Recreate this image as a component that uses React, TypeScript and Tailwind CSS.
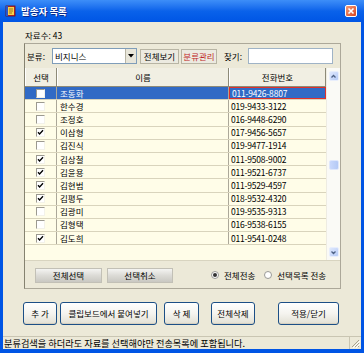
import React from 'react'

const rows = [
  { name: '조동화', phone: '011-9426-8807', checked: false, selected: true },
  { name: '한수경', phone: '019-9433-3122', checked: false },
  { name: '조정호', phone: '016-9448-6290', checked: false },
  { name: '이삼형', phone: '017-9456-5657', checked: true },
  { name: '김진식', phone: '019-9477-1914', checked: false },
  { name: '김상철', phone: '011-9508-9002', checked: true },
  { name: '김윤용', phone: '011-9521-6737', checked: true },
  { name: '김현범', phone: '011-9529-4597', checked: true },
  { name: '김평두', phone: '018-9532-4320', checked: true },
  { name: '김광미', phone: '019-9535-9313', checked: false },
  { name: '김형택', phone: '016-9538-6155', checked: false },
  { name: '김도희', phone: '011-9541-0248', checked: true },
]

export default function App() {
  return (
    <div className="w-[364px] h-[353px] overflow-hidden bg-[#0055e5] flex flex-col font-['Noto_Sans_CJK_KR',sans-serif] text-[8.5px] leading-[11px] text-black">
      {/* Title bar */}
      <div className="h-[22px] shrink-0 flex items-center pl-[5px] pr-[7px] bg-gradient-to-b from-[#3d8ef8] via-[#0a62ea] to-[#0055e5]">
        <BookIcon />
        <span className="ml-[4px] text-white font-bold text-[9.5px] [text-shadow:1px_1px_#0b2a8a]">발송자 목록</span>
        <div className="ml-auto w-[12px] h-[12px] rounded-[2px] border border-white bg-gradient-to-br from-[#f39a76] to-[#d8421b] flex items-center justify-center">
          <svg width="8" height="8" viewBox="0 0 8 8">
            <path d="M1.5 1.5L6.5 6.5M6.5 1.5L1.5 6.5" stroke="white" strokeWidth="1.6" />
          </svg>
        </div>
      </div>

      {/* Body */}
      <div className="flex-1 mx-[3px] mb-[4px] bg-[#ece9d8] flex flex-col">
        <div className="h-[21px] shrink-0 flex items-end pb-[2px] pl-[22px]">자료수: 43</div>

        {/* Panel */}
        <div className="ml-[21px] w-[317px] h-[246px] shrink-0 border border-[#aca899] border-l-[#858270] flex flex-col">
          {/* Toolbar */}
          <div className="h-[24px] shrink-0 flex items-center pl-[2px]">
            <span className="w-[25px]">분류:</span>
            <div className="w-[85px] h-[16px] bg-white border border-[#7f9db9] flex items-center">
              <span className="flex-1 pl-[2px]">비지니스</span>
              <div className="w-[11px] h-[14px] bg-[#e8e6da] border-l border-[#b8b5a5] flex items-center justify-center">
                <svg width="6" height="4" viewBox="0 0 6 4">
                  <path d="M0 0H6L3 3.5Z" fill="#000" />
                </svg>
              </div>
            </div>
            <ToolBtn className="ml-[3px] w-[39px]">전체보기</ToolBtn>
            <ToolBtn className="ml-[2px] w-[36px] text-[#c02828]">분류관리</ToolBtn>
            <span className="ml-[7px] w-[24px]">찾기:</span>
            <div className="w-[85px] h-[16px] bg-white border border-[#9fb3c6]" />
          </div>

          {/* Table */}
          <div className="h-[192px] shrink-0 flex bg-[#fffde8]">
            <div className="w-[301px] flex flex-col">
              <div className="h-[19px] shrink-0 flex bg-[#f1efe3] border-b border-[#8d8a78]">
                <HeadCell className="w-[32px]">선택</HeadCell>
                <HeadCell className="w-[172px]">이름</HeadCell>
                <HeadCell className="w-[97px]">전화번호</HeadCell>
              </div>
              {rows.map((r) => (
                <div key={r.name} className={`h-[13.2px] shrink-0 flex border-b border-[#d9d4bc] ${r.selected ? 'bg-[#316ac5] text-white' : ''}`}>
                  <div className="w-[32px] border-r border-[#aca899] flex items-center justify-center">
                    <Check checked={r.checked} />
                  </div>
                  <div className="w-[172px] border-r border-[#aca899] pl-[3px] flex items-center">{r.name}</div>
                  <div className={`w-[97px] pl-[2px] flex items-center tracking-[-0.2px] ${r.selected ? 'border border-[#e0302a]' : ''}`}>{r.phone}</div>
                </div>
              ))}
            </div>
            <Scrollbar />
          </div>

          {/* Panel buttons */}
          <div className="flex-1 flex items-center pl-[10px] pt-[1px] border-t border-[#d8d4c0]">
            <GreyBtn className="w-[67px]">전체선택</GreyBtn>
            <GreyBtn className="ml-[5px] w-[66px]">선택취소</GreyBtn>
            <Radio className="ml-[38px]" checked />
            <span className="ml-[5px]">전체전송</span>
            <Radio className="ml-[9px]" />
            <span className="ml-[5px]">선택목록 전송</span>
          </div>
        </div>

        {/* Bottom buttons */}
        <div className="mt-[13px] h-[23px] shrink-0 flex">
          <XpBtn className="ml-[20px] w-[34px]">추 가</XpBtn>
          <XpBtn className="ml-[3px] w-[97px]">클립보드에서 붙여넣기</XpBtn>
          <XpBtn className="ml-[7px] w-[35px]">삭 제</XpBtn>
          <XpBtn className="ml-[12px] w-[44px]">전체삭제</XpBtn>
          <XpBtn className="ml-[23px] w-[61px]">적용/닫기</XpBtn>
        </div>

        {/* Status bar */}
        <div className="mt-auto h-[13px] shrink-0 flex items-stretch border-t border-[#c9c5b2]">
          <div className="flex-1 pl-[1px] flex items-center text-[9.2px] border-r border-[#c9c5b2]">분류검색을 하더라도 자료를 선택해야만 전송목록에 포함됩니다.</div>
          <div className="w-[11px] flex items-end justify-end pb-[1px] pr-[1px]">
            <svg width="9" height="9" viewBox="0 0 9 9">
              <path d="M8 1L1 8M8 4L4 8M8 7L7 8" stroke="#a7a38f" strokeWidth="1" />
              <path d="M9 2L2 9M9 5L5 9" stroke="#fff" strokeWidth="1" />
            </svg>
          </div>
        </div>
      </div>
    </div>
  )
}

function BookIcon() {
  return (
    <svg width="12" height="12" viewBox="0 0 12 12">
      <rect x="1" y="1" width="9" height="10" fill="#d8282a" stroke="#6a1010" strokeWidth="0.8" />
      <rect x="3" y="2" width="6" height="8" fill="#f6d24a" />
      <rect x="1" y="1" width="2" height="10" fill="#2b54c8" />
      <path d="M4 4H8M4 6H8M4 8H7" stroke="#8a5a10" strokeWidth="0.8" />
    </svg>
  )
}

function HeadCell({ className = '', children }: { className?: string; children: React.ReactNode }) {
  return (
    <div className={`h-full flex items-center justify-center border-l border-white border-r border-r-[#8d8a78] ${className}`}>
      {children}
    </div>
  )
}

function Check({ checked }: { checked: boolean }) {
  return (
    <span className="w-[9px] h-[9px] bg-white border-t border-l border-[#9c9a90] border-r border-b border-r-[#f3f2ea] border-b-[#f3f2ea] flex items-center justify-center">
      {checked && (
        <svg width="7" height="7" viewBox="0 0 7 7">
          <path d="M1 3.2L2.6 5L6 1.2" stroke="#000" strokeWidth="1.3" fill="none" />
        </svg>
      )}
    </span>
  )
}

function ToolBtn({ className = '', children }: { className?: string; children: React.ReactNode }) {
  return (
    <div className={`h-[15px] flex items-center justify-center bg-[#eceae0] border border-[#b8b5a4] ${className}`}>
      {children}
    </div>
  )
}

function GreyBtn({ className = '', children }: { className?: string; children: React.ReactNode }) {
  return (
    <div className={`h-[15px] flex items-center justify-center bg-gradient-to-b from-[#f4f4f2] via-[#dcdbd6] to-[#c9c8c2] border border-[#c2c0b6] ${className}`}>
      {children}
    </div>
  )
}

function XpBtn({ className = '', children }: { className?: string; children: React.ReactNode }) {
  return (
    <div className={`h-full flex items-center justify-center rounded-[3px] border border-[#1c4f86] bg-gradient-to-b from-white via-[#f5f4ef] to-[#e2e0d4] shadow-[inset_0_-1px_#d6d0c0] ${className}`}>
      {children}
    </div>
  )
}

function Radio({ className = '', checked = false }: { className?: string; checked?: boolean }) {
  return (
    <span className={`w-[8px] h-[8px] rounded-full border border-[#9a9a96] bg-white flex items-center justify-center ${className}`}>
      {checked && <span className="w-[4px] h-[4px] rounded-full bg-[#333]" />}
    </span>
  )
}

function Scrollbar() {
  return (
    <div className="w-[14px] flex flex-col items-center bg-[#fafaf6] border-l border-[#eeece2]">
      <ScrollBtn className="mt-[3px]">
        <path d="M1.5 4.5L3.5 2.5L5.5 4.5" stroke="#4d6185" strokeWidth="1.3" fill="none" />
      </ScrollBtn>
      <div className="mt-[79px] w-[10px] h-[10px] rounded-[2px] bg-gradient-to-r from-[#c9d8fc] to-[#b4c9f5] border border-[#dfe7fb]" />
      <ScrollBtn className="mt-auto mb-[3px]">
        <path d="M1.5 2.5L3.5 4.5L5.5 2.5" stroke="#4d6185" strokeWidth="1.3" fill="none" />
      </ScrollBtn>
    </div>
  )
}

function ScrollBtn({ className = '', children }: { className?: string; children: React.ReactNode }) {
  return (
    <div className={`w-[10px] h-[10px] rounded-[2px] bg-gradient-to-br from-[#dfe8fd] to-[#b6cbf6] border border-[#e8eefc] flex items-center justify-center ${className}`}>
      <svg width="7" height="7" viewBox="0 0 7 7">
        {children}
      </svg>
    </div>
  )
}
